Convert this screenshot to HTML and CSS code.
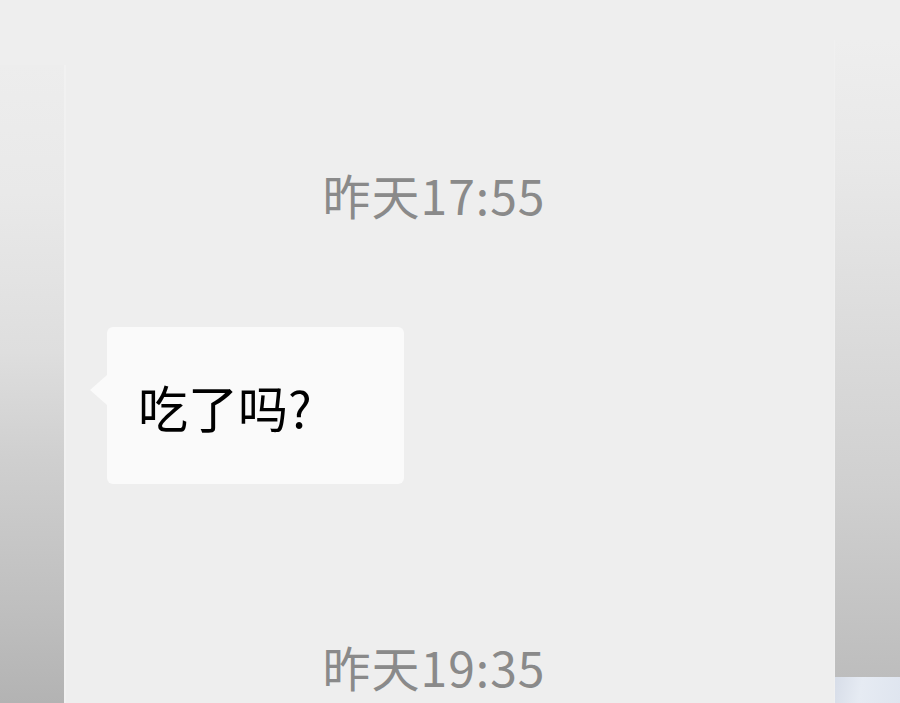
FILE: index.html
```html
<!DOCTYPE html>
<html lang="zh">
<head>
<meta charset="utf-8">
<link rel="stylesheet" href="styles.css">
</head>
<body>
<div class="stage">
  <div class="gutter gutter-left"><div class="shade shade-left"></div></div>
  <main class="panel">
    <div class="time">昨天17:55</div>
    <div class="msg">
      <div class="bubble">吃了吗?</div>
    </div>
    <div class="time time-second">昨天19:35</div>
  </main>
  <div class="gutter gutter-right">
    <div class="shade shade-right"></div>
    <div class="photo"></div>
  </div>
</div>
</body>
</html>
```

FILE: styles.css
```css
html, body {
  margin: 0;
  padding: 0;
  background: #eeeeee;
  overflow: hidden;
}
.stage {
  display: flex;
  width: 900px;
  height: 703px;
  font-family: "Noto Sans CJK SC", "Noto Sans", sans-serif;
}
.gutter {
  display: flex;
  flex-direction: column;
}
.gutter-left {
  width: 66px;
  padding-top: 65px;
  box-sizing: border-box;
}
.gutter-right {
  width: 66px;
  padding-top: 40px;
  box-sizing: border-box;
}
.shade {
  flex: 1;
}
.shade-left {
  background: linear-gradient(to bottom, #ededed 0%, #e9e9e9 20%, #dedede 45%, #cfcfcf 62%, #bfbfbf 85%, #b3b3b3 100%);
  border-right: 2px solid #f1f1f1;
}
.shade-right {
  background: linear-gradient(to bottom, #eeeeee 0%, #e8e8e8 20%, #dcdcdc 45%, #d0d0d0 70%, #bdbdbd 100%);
  border-left: 1px solid #f0f0f0;
}
.photo {
  height: 26px;
  background: linear-gradient(100deg, #d7dde8 0%, #e6ebf3 40%, #dfe5ef 100%);
  border-left: 1px solid #f0f0f0;
}
.panel {
  width: 768px;
  background: #eeeeee;
  padding-top: 167px;
  box-sizing: border-box;
}
.time {
  height: 54px;
  line-height: 54px;
  font-size: 48px;
  font-weight: 400;
  letter-spacing: 1px;
  color: #8a8a8a;
  text-align: center;
  padding-right: 32px;
}
.time-second {
  margin-top: 155px;
}
.msg {
  margin-top: 106px;
  padding-left: 41px;
  display: flex;
}
.bubble {
  position: relative;
  width: 297px;
  height: 157px;
  box-sizing: border-box;
  padding-left: 31px;
  display: flex;
  align-items: center;
  background: #fafafa;
  border-radius: 6px;
  font-size: 50px;
  color: #000000;
}
.bubble::before {
  content: "";
  position: absolute;
  left: -17px;
  top: 48px;
  border-top: 15px solid transparent;
  border-bottom: 15px solid transparent;
  border-right: 17px solid #fafafa;
}
```
